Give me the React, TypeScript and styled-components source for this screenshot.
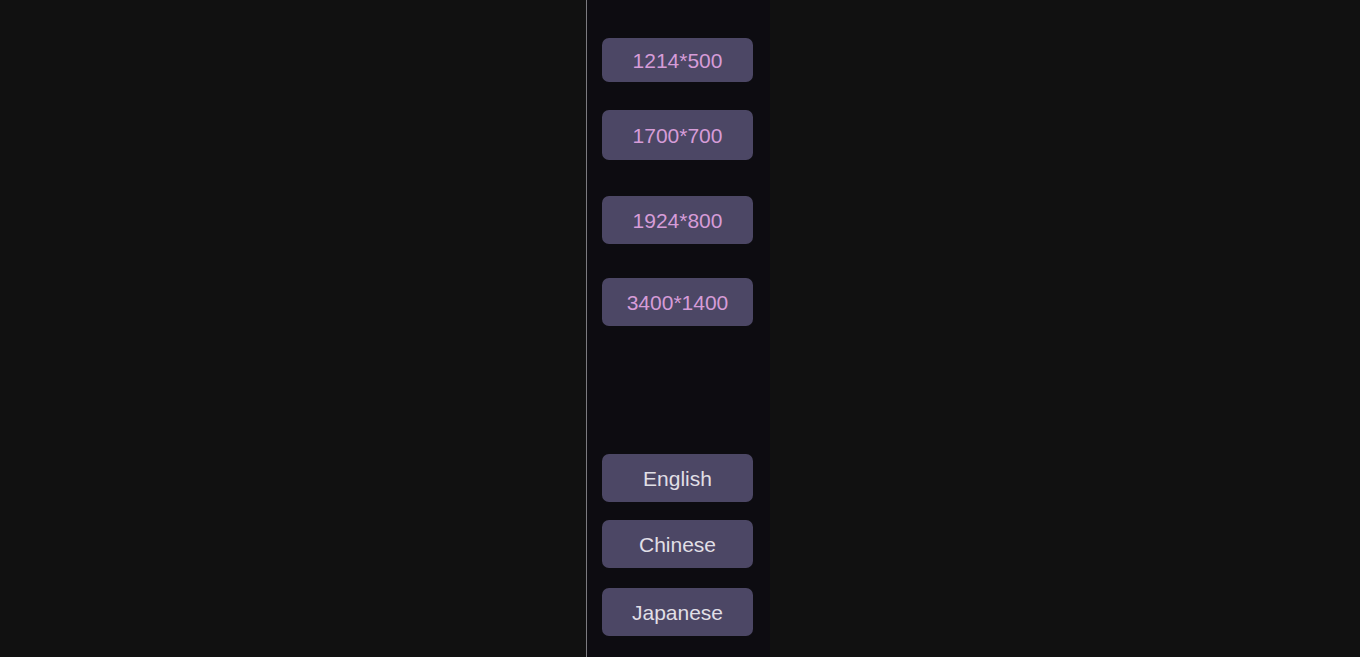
import React from "react";
import styled, { createGlobalStyle } from "styled-components";

const GlobalStyle = createGlobalStyle`
  html, body {
    margin: 0;
    padding: 0;
    background: #111111;
    height: 100%;
  }
  #root {
    height: 100%;
  }
`;

const sizes = [
  { label: "1214*500", top: 38, h: 44 },
  { label: "1700*700", top: 28, h: 50 },
  { label: "1924*800", top: 36, h: 48 },
  { label: "3400*1400", top: 34, h: 48 },
];

const langs = [
  { label: "English", top: 128 },
  { label: "Chinese", top: 18 },
  { label: "Japanese", top: 20 },
];

const App = () => {
  return (
    <Page>
      <GlobalStyle />
      <Stage />
      <Sidebar>
        {sizes.map((s) => (
          <Button key={s.label} $top={s.top} $h={s.h} $tone="size">
            {s.label}
          </Button>
        ))}
        {langs.map((l) => (
          <Button key={l.label} $top={l.top} $h={48} $tone="lang">
            {l.label}
          </Button>
        ))}
      </Sidebar>
      <Rest />
    </Page>
  );
};

export default App;

const Page = styled.div`
  width: 100%;
  height: 657px;
  display: flex;
  background: #111111;
  overflow: hidden;
`;

const Stage = styled.div`
  width: 586px;
  flex-shrink: 0;
`;

const Sidebar = styled.aside`
  width: 184px;
  flex-shrink: 0;
  border-left: 1px solid #7c7b80;
  background: #0d0c11;
  display: flex;
  flex-direction: column;
  align-items: flex-start;
  padding-left: 15px;
  box-sizing: border-box;
`;

const Rest = styled.div`
  flex: 1;
`;

const Button = styled.button<{ $top: number; $h: number; $tone: "size" | "lang" }>`
  width: 151px;
  height: ${(p) => p.$h}px;
  margin-top: ${(p) => p.$top}px;
  flex-shrink: 0;
  border: none;
  border-radius: 7px;
  background: #4c4765;
  color: ${(p) => (p.$tone === "size" ? "#d69cd8" : "#e0dfe6")};
  font-family: "Liberation Sans", Arial, sans-serif;
  font-size: 21px;
  display: flex;
  align-items: center;
  justify-content: center;
  padding: 2px 0 0;
  box-sizing: border-box;
  cursor: pointer;
`;
